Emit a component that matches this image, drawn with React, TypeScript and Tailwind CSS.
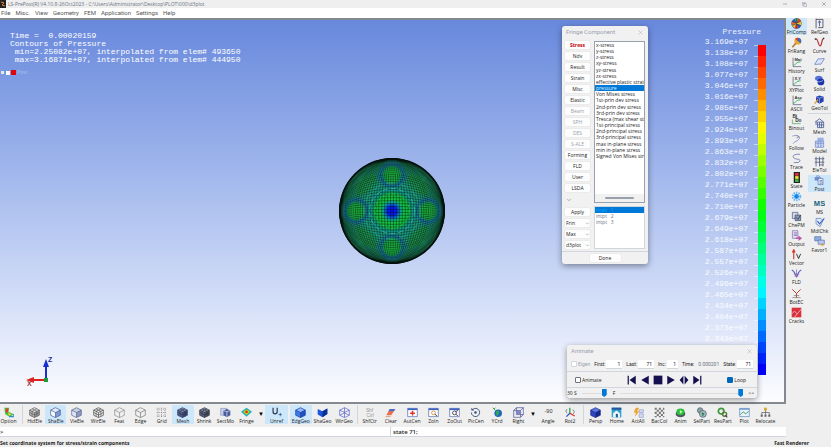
import type { ReactNode } from 'react';
import { ChevronDown, Copy, Minus, X } from 'lucide-react';

type Tool = { label: string; icon: ReactNode; active?: boolean };

const Svg = ({ children }: { children: ReactNode }) => (
  <svg viewBox="0 0 16 16" className="size-[11px] shrink-0" fill="none" aria-hidden="true">
    {children}
  </svg>
);

interface CubeProps {
  top?: string;
  left?: string;
  right?: string;
  line?: string;
  mesh?: boolean;
}

const Cube = ({ top = 'none', left = 'none', right = 'none', line = '#444', mesh = false }: CubeProps) => (
  <Svg>
    <path d="M8 1 15 4.5 8 8 1 4.5Z" fill={top} />
    <path d="M1 4.5 8 8v7.4L1 12Z" fill={left} />
    <path d="M15 4.5 8 8v7.4L15 12Z" fill={right} />
    <path d="M8 1 15 4.5V12L8 15.4 1 12V4.5ZM1 4.5 8 8l7-3.5M8 8v7.4" stroke={line} />
    {mesh && (
      <path
        d="M4.5 2.7 11.5 6.2v7.4M11.5 2.7 4.5 6.2v7.4M1 8.2 8 11.7l7-3.5"
        stroke={line}
        strokeWidth="0.9"
      />
    )}
  </Svg>
);

const WireCube = ({ line = '#555' }: { line?: string }) => (
  <Svg>
    <path
      d="M8 1 15 4.5V12L8 15.4 1 12V4.5ZM1 4.5 8 8l7-3.5M8 8v7.4M1 12l7-3.5 7 3.5M8 1v7.5"
      stroke={line}
    />
  </Svg>
);

const Fringe = () => (
  <Svg>
    <path d="M8 1 16 7 8 14 0 7Z" fill="#22a8e0" />
    <path d="M8 2.500 14 7 8 12.500 2 7Z" fill="#43c63c" />
    <path d="M8 4 12 7 8 11 4 7Z" fill="#f5e12a" />
    <circle cx="8" cy="7.200" r="2" fill="#e52b1e" />
  </Svg>
);

const Grid = () => (
  <Svg>
    <path d="M3 1v14M8 1v14M13 1v14M1 3h14M1 8h14M1 13h14" stroke="#777" strokeDasharray="1.500 1.500" />
  </Svg>
);

const ZoomBox = ({ out = false }: { out?: boolean }) => (
  <Svg>
    <path d="M1 2h14v12H1Z" fill="#fff" stroke="#5068a8" />
    <path d="M1 2h14v2.500H1Z" fill="#3d62c4" />
    <circle cx="8" cy="8.500" r="2.800" stroke={out ? '#334' : '#d08a3a'} strokeWidth="1.200" />
    <path d={out ? 'M10 10.500 13 13M9 7l4-2' : 'M10 10.500 13 13'} stroke="#445" strokeWidth="1.400" />
  </Svg>
);

// small axes with a curve, shared by the plotting tools
const Chart = ({ tag }: { tag: ReactNode }) => (
  <Svg>
    <path d="M3 1v13h12" stroke="#557" />
    <path d="M3 12c4 0 4-5 11-5" stroke="#2fb35a" strokeWidth="1.300" />
    {tag}
  </Svg>
);

const Tag = ({ children }: { children: string }) => (
  <text x="5" y="5.500" fontSize="6" fontWeight="700" fill="#333" fontFamily="Liberation Sans">
    {children}
  </text>
);

const ColorBall = () => (
  <Svg>
    <circle cx="8" cy="8" r="7.500" fill="#2f57b8" />
    <path d="m8 8-3-7 6-.5Z" fill="#3fa648" />
    <path d="m8 8 3-7.500 4 4Z" fill="#e23b2b" />
    <path d="m8 8 7-3.500V11Z" fill="#efc527" />
    <path d="m8 8 3 7-6 .3Z" fill="#e23b2b" />
    <path d="m8 8-3 7-4-4Z" fill="#efc527" />
    <path d="M8 8 .800 10V5Z" fill="#e8632a" />
    <path d="M2 5c4 2 8 2 12 0M2 11c4-2 8-2 12 0M8 1v14" stroke="#333" strokeWidth="0.7" />
  </Svg>
);

const bottomGroups: { tools: Tool[]; end?: 'line' | 'caret' | 'gap' }[] = [
  {
    tools: [
      {
        label: 'Option',
        icon: (
          <Svg>
            <path d="M2 1h7l-1 6 7 3-5 5-7-5Z" fill="#49bf46" />
            <path d="M4 2h4l-1 6H4Z" fill="#e23b2b" />
            <path d="m7 8 5 2-3 3Z" fill="#f4cf2d" />
            <path d="M9 14h6v-4" stroke="#2a8ccc" strokeWidth="1.500" />
          </Svg>
        ),
      },
    ],
    end: 'line',
  },
  {
    tools: [
      { label: 'HidEle', icon: <Cube top="#eee" left="#bbb" right="#999" line="#555" mesh /> },
      { label: 'ShaEle', icon: <Cube top="#e3edff" left="#f7faff" right="#7b98d6" line="#4a5f91" />, active: true },
      { label: 'VieEle', icon: <Cube top="#c8d0e6" left="#dfe5f5" right="#8d98bd" line="#566290" /> },
      { label: 'WirEle', icon: <Cube line="#444" mesh /> },
      { label: 'Feat', icon: <Cube line="#8a8a8a" /> },
      { label: 'Edge', icon: <Cube line="#777" /> },
      { label: 'Grid', icon: <Grid /> },
      { label: 'Mesh', icon: <Cube top="#8291b8" left="#596a98" right="#3d4b74" line="#26304d" mesh />, active: true },
      { label: 'Shrink', icon: <Cube top="#8891a8" left="#5b647c" right="#474e61" line="#2e3342" mesh /> },
      {
        label: 'SectMo',
        icon: (
          <Svg>
            <path d="M1 2h9v10H1Z" fill="#c9d2ea" stroke="#8b97bd" />
            <path d="m5 5 5-2 5 2v7l-5 3-5-3Z" fill="#4b5d9b" />
            <path d="m5 5 5 2 5-2M10 7v8" stroke="#dbe3f8" />
          </Svg>
        ),
      },
      { label: 'Fringe', icon: <Fringe /> },
    ],
    end: 'caret',
  },
  {
    tools: [
      {
        label: 'Unref',
        icon: (
          <Svg>
            <path d="M3 1v6a3 3 0 0 0 6 0V1" stroke="#333f55" strokeWidth="1.800" />
            <path d="M11 11h5M13.500 8.500v5" stroke="#3a5fa8" strokeWidth="1.200" />
          </Svg>
        ),
        active: true,
      },
    ],
    end: 'gap',
  },
  {
    tools: [
      { label: 'EdgGeo', icon: <Cube top="#8db7ff" left="#3f78ea" right="#2152c0" line="#173c94" />, active: true },
      {
        label: 'ShaGeo',
        icon: (
          <Svg>
            <path d="m1 3 7 3 7-4v8l-7 5-7-4Z" fill="#1c55d8" />
            <path d="m8 6 7-4v8l-7 5Z" fill="#0c2f96" />
          </Svg>
        ),
      },
      { label: 'WirGeo', icon: <WireCube line="#5661c9" /> },
    ],
    end: 'line',
  },
  {
    tools: [
      {
        label: 'ShfCtr',
        icon: (
          <Svg>
            <g fontSize="7" fill="#999" fontFamily="Liberation Sans" textAnchor="middle">
              <text x="8" y="7">Shf</text>
              <text x="9" y="15">Ctrl</text>
            </g>
          </Svg>
        ),
      },
      {
        label: 'Clear',
        icon: (
          <Svg>
            <path d="m2 12 5-9h8l-6 9Z" fill="#ef6b4a" />
            <path d="M7 3h8l-2 3H5Z" fill="#4b6fc8" />
            <path d="M1 14h7" stroke="#e09b7b" strokeWidth="1.500" />
          </Svg>
        ),
      },
      {
        label: 'AutCen',
        icon: (
          <Svg>
            <path d="M1 2h14v12H1Z" fill="#fff" stroke="#4a68b8" />
            <path d="M1 2h14v2.500H1Z" fill="#3d62c4" />
            <path d="M8 5.500v7M4.500 9h7" stroke="#e0322a" strokeWidth="2.200" />
          </Svg>
        ),
      },
      { label: 'ZoIn', icon: <ZoomBox /> },
      { label: 'ZoOut', icon: <ZoomBox out /> },
      {
        label: 'PicCen',
        icon: (
          <Svg>
            <path d="M4 3.500A6 6 0 1 1 2 8" stroke="#364b78" strokeWidth="1.300" />
            <path d="M2 1v4h4Z" fill="#364b78" />
            <circle cx="8" cy="8" r="1.800" fill="#364b78" />
          </Svg>
        ),
      },
      {
        label: 'YCrd',
        icon: (
          <Svg>
            <circle cx="9" cy="9" r="5.500" fill="#1f67b8" />
            <path d="M6 6c3-2 5 0 4 3s-2 4-4 3Z" fill="#35a853" />
            <path d="M1 1l4 4M5 1 3 3" stroke="#2aa84a" strokeWidth="1.400" />
          </Svg>
        ),
      },
      {
        label: 'Right',
        icon: (
          <Svg>
            <path d="M5 1h10v10H5ZM1 5h10v10H1ZM1 5l4-4M11 5l4-4M11 15l4-4" stroke="#474f92" />
            <path d="M5 5h6v6H5Z" fill="#7d87c7" />
          </Svg>
        ),
      },
    ],
    end: 'caret',
  },
  {
    tools: [
      {
        label: 'Angle',
        icon: (
          <Svg>
            <text x="8" y="8" fontSize="8" fill="#333" textAnchor="middle" fontFamily="Liberation Sans">
              -90
            </text>
          </Svg>
        ),
      },
      {
        label: 'Rot2',
        icon: (
          <Svg>
            <path d="M7 9V1" stroke="#1fa04a" strokeWidth="1.800" />
            <path d="m7 9 7 4" stroke="#d8302a" strokeWidth="1.800" />
            <path d="m7 9-5 5" stroke="#2b56c8" strokeWidth="1.800" />
            <path d="M11 4c3 1 3 4 1 6" stroke="#555" />
            <path d="M3 3c-2 2-2 4 0 6" stroke="#555" />
          </Svg>
        ),
      },
    ],
    end: 'line',
  },
  {
    tools: [
      { label: 'Persp', icon: <Cube top="#5c78e8" left="#2b44c8" right="#15268c" line="#1b2a80" /> },
      {
        label: 'Home',
        icon: (
          <Svg>
            <path d="M1 1h14v14H1Z" fill="#2e9fce" />
            <path d="M1 1h14v3H1Z" fill="#24569e" />
            <path d="m8 5 5 4v6H3V9Z" fill="#eaf6fb" />
            <path d="M7 10h3v5H7Z" fill="#24569e" />
          </Svg>
        ),
      },
      {
        label: 'ActAll',
        icon: (
          <Svg>
            <path d="M4 1h5L6 6h3l-6 8 1-6H1Z" fill="#f3a32c" />
            <path d="M9 4h6v4H9ZM9 10h6v5H9Z" fill="#d5ddf2" stroke="#8fa1d0" />
          </Svg>
        ),
      },
      {
        label: 'BacCol',
        icon: (
          <Svg>
            <path
              d="M1 1h3v3H1zM7 1h3v3H7zM13 1h2v3h-2zM4 4h3v3H4zM10 4h3v3h-3zM1 7h3v3H1zM7 7h3v3H7zM13 7h2v3h-2zM4 10h3v3H4zM10 10h3v3h-3zM1 13h3v2H1zM7 13h3v2H7zM13 13h2v2h-2z"
              fill="#777"
            />
          </Svg>
        ),
      },
      {
        label: 'Anim',
        icon: (
          <Svg>
            <ellipse cx="8" cy="10" rx="7" ry="5" fill="#4b5563" />
            <ellipse cx="8" cy="7" rx="6" ry="5" fill="#2dbb3a" />
            <path d="m7 4 4 3-4 3Z" fill="#b8f5b2" />
          </Svg>
        ),
      },
      {
        label: 'SelPart',
        icon: (
          <Svg>
            <circle cx="6" cy="5" r="4" fill="#8fa0a8" stroke="#45606a" />
            <circle cx="10" cy="10" r="5" fill="#a9bcc4" stroke="#3b5a68" />
            <path d="M8 10h4M10 8v5" stroke="#2d7a52" strokeWidth="1.500" />
          </Svg>
        ),
      },
      {
        label: 'ResPart',
        icon: (
          <Svg>
            <circle cx="6" cy="6" r="4" stroke="#3c9a3a" strokeWidth="2.600" />
            <circle cx="11" cy="10.500" r="3" stroke="#5a7a3c" strokeWidth="2" />
            <path d="m12 12 3 3" stroke="#444" strokeWidth="1.600" />
          </Svg>
        ),
      },
      {
        label: 'Plot',
        icon: (
          <Svg>
            <path d="M1 2h14v12H1Z" fill="#e7f2fb" stroke="#5c84bd" />
            <path d="M1 2h14v2H1Z" fill="#6d96cf" />
            <path d="m2 11 4-4 4 3 4-4" stroke="#3a9a62" strokeWidth="1.300" />
          </Svg>
        ),
      },
      {
        label: 'Relocate',
        icon: (
          <Svg>
            <path d="M8 4v4M2.500 11V8h11v3M8 8v3" stroke="#555" />
            <path d="M6 1h4v4H6Z" fill="#d7a52b" />
            <path d="M1 11h3v3H1ZM6.500 11h3v3h-3ZM12 11h3v3h-3Z" fill="#667" />
          </Svg>
        ),
      },
    ],
  },
];

const postTools: Tool[] = [
  { label: 'FriComp', icon: <ColorBall />, active: true },
  {
    label: 'FriRang',
    icon: (
      <Svg>
        <circle cx="10" cy="6" r="5" fill="#e9a92c" />
        <path d="M10 6V1a5 5 0 0 1 4 8Z" fill="#3c67c4" />
        <path d="M10 6 6 3a5 5 0 0 1 4-2Z" fill="#d9392b" />
        <path d="m7 9-5 6" stroke="#a87a36" strokeWidth="2.200" />
      </Svg>
    ),
  },
  { label: 'History', icon: <Chart tag={<Tag>Mat</Tag>} /> },
  { label: 'XYPlot', icon: <Chart tag={<Tag>X,Y</Tag>} /> },
  { label: 'ASCII', icon: <Chart tag={<Tag>Asc</Tag>} /> },
  {
    label: 'Binout',
    icon: (
      <Svg>
        <g fontSize="7" fontWeight="700" fill="#333" fontFamily="Liberation Sans">
          <text x="2" y="6">Bi</text>
          <text x="6" y="12">Do</text>
        </g>
        <path d="M2 8v6h12" stroke="#3fa45a" />
      </Svg>
    ),
  },
  {
    label: 'Follow',
    icon: (
      <Svg>
        <path d="M2 3c6-2 12 0 10 4S5 10 3 14" stroke="#8a8fd8" strokeWidth="1.300" />
        <path d="m8 2 4 2-4 2" stroke="#777" />
      </Svg>
    ),
  },
  {
    label: 'Trace',
    icon: (
      <Svg>
        <path d="M13 2C6 1 1 4 4 7s9 1 9 4-5 3-9 3" stroke="#6b74a8" strokeWidth="1.300" />
      </Svg>
    ),
  },
  {
    label: 'State',
    icon: (
      <Svg>
        <path d="M4 0h9v16H4Z" fill="#222" />
        <path d="M6 1.500h5v4H6Z" fill="#e6352b" />
        <path d="M6 6h5v4H6Z" fill="#f1df2e" />
        <path d="M6 10.500h5v4H6Z" fill="#3bc13d" />
      </Svg>
    ),
  },
  {
    label: 'Particle',
    icon: (
      <Svg>
        <circle cx="8" cy="8" r="3.500" fill="#1487e8" />
        <circle cx="8" cy="8" r="5.500" stroke="#5db4f7" strokeWidth="3" strokeDasharray="2 1.500" />
      </Svg>
    ),
  },
  {
    label: 'ChePM',
    icon: (
      <Svg>
        <path d="M2 2h8v9H2Z" fill="#d3d9e8" stroke="#4d5a80" />
        <path d="M6 6h8v8H6Z" fill="#8f9cbf" stroke="#3d4768" />
        <path d="m7 9 3 3 4-6" stroke="#222" />
      </Svg>
    ),
  },
  {
    label: 'Output',
    icon: (
      <Svg>
        <path d="M2 1h8v11H2Z" fill="#e5e0f5" stroke="#7a6cab" />
        <path d="M4 4h5M4 6h5M4 8h5" stroke="#7a6cab" />
        <path d="M7 11h4V8l5 4-5 4v-3H7Z" fill="#b856a8" />
      </Svg>
    ),
  },
  {
    label: 'Vector',
    icon: (
      <Svg>
        <path d="M4 15V3M2 5l2-4 2 4" stroke="#d23229" strokeWidth="1.600" />
        <path d="m8 7 3 7 3-7" stroke="#333" strokeWidth="1.400" />
      </Svg>
    ),
  },
  {
    label: 'FLD',
    icon: (
      <Svg>
        <path d="M1 3c5 1 5 9 7 9s2-8 7-9" stroke="#5b63c9" strokeWidth="1.600" />
        <path d="M4 9h8M5 12h6M8 2v12" stroke="#8c5bb0" />
      </Svg>
    ),
  },
  {
    label: 'BotEC',
    icon: (
      <Svg>
        <path d="m2 2 6 6 6-6M8 8v6" stroke="#c0392b" strokeWidth="1.400" />
        <path d="M2 14h12M4 11h8" stroke="#777" />
      </Svg>
    ),
  },
  {
    label: 'Cracks',
    icon: (
      <Svg>
        <path d="M1 1h14v14H1Z" fill="#d8323c" />
        <path d="m1 10 4-4 4 4 6-7M5 15l4-5" stroke="#f6b8bb" strokeWidth="1.300" />
      </Svg>
    ),
  },
];

const modelGroups: Tool[][] = [
  [
    {
      label: 'RefGeo',
      icon: (
        <Svg>
          <path d="M3 1v14M3 2h10v12H6" stroke="#445" strokeWidth="1.200" />
          <path d="M8 4v8M6 7l2-3 2 3" stroke="#3d5bb0" strokeWidth="1.300" />
        </Svg>
      ),
    },
    {
      label: 'Curve',
      icon: (
        <Svg>
          <path d="M2 3c4-2 4 10 7 10s1-9 5-11" stroke="#b3343a" strokeWidth="1.700" />
          <path d="M1 2h2v2H1ZM13 1h2v2h-2Z" fill="#333" />
        </Svg>
      ),
    },
    {
      label: 'Surf',
      icon: (
        <Svg>
          <path d="M6 4c3 1 6-1 9 0l-5 8c-3-1-6 1-9 0Z" fill="#dbe5fa" stroke="#5470b5" />
        </Svg>
      ),
    },
    {
      label: 'Solid',
      icon: (
        <Svg>
          <ellipse cx="7" cy="5" rx="5.500" ry="4" fill="#5871d8" />
          <circle cx="10" cy="10" r="5" fill="#1b35a8" />
          <path d="M3 8c3 3 7 2 10 0" stroke="#cfd9ff" />
        </Svg>
      ),
    },
    {
      label: 'GeoTol',
      icon: (
        <Svg>
          <path d="m3 4 5-2 6 2v7l-6 3-5-3Z" fill="#2440ae" />
          <path d="m3 4 5 2 6-2M8 6v8" stroke="#9eb1f0" />
          <path d="m1 14 5-6" stroke="#d8a12b" strokeWidth="2" />
        </Svg>
      ),
    },
  ],
  [
    {
      label: 'Mesh',
      icon: (
        <Svg>
          <path d="m2 6 6-5 6 5M5 6h9v8H5ZM5 10h9M8 6v8M11 6v8M3 4v6" stroke="#465a96" strokeWidth="1.200" />
        </Svg>
      ),
    },
    {
      label: 'Model',
      icon: (
        <Svg>
          <path d="M5 1h9v5H5Z" fill="#9bb1e6" />
          <path d="M2 6h12v9H2Z" fill="#c9d6f5" stroke="#6c86c9" />
          <path d="M2 9h12M6 6v9M10 6v9" stroke="#6c86c9" />
        </Svg>
      ),
    },
    {
      label: 'EleTol',
      icon: (
        <Svg>
          <path d="M3 1v14M8 1v14M13 1v14M1 4h14M1 9h14M8 13h6" stroke="#515c7c" strokeWidth="1.200" />
        </Svg>
      ),
    },
    {
      label: 'Post',
      active: true,
      icon: (
        <Svg>
          <path d="M1 3h7v5H1Z" fill="#6d8bd0" />
          <path d="M6 5h7v9H6Z" fill="#eef3ff" stroke="#5369a5" />
          <path d="M8 8h4M8 10h4M8 12h4M3 2l3-1 4 3" stroke="#5369a5" />
        </Svg>
      ),
    },
  ],
  [
    {
      label: 'MS',
      icon: (
        <Svg>
          <text x="8" y="12" fontSize="11" fontWeight="700" fill="#17637c" textAnchor="middle" fontFamily="Liberation Sans">
            MS
          </text>
        </Svg>
      ),
    },
    {
      label: 'MdlChk',
      icon: (
        <Svg>
          <path d="M3 2h7l3 3-4 9-6-4Z" fill="#dfe8fb" stroke="#5a78bb" />
          <path d="m5 6 3 4 7-8" stroke="#3563b8" strokeWidth="1.500" />
        </Svg>
      ),
    },
    {
      label: 'Favor1',
      icon: (
        <Svg>
          <path d="M1 1h9v6H1Z" fill="#8faadf" stroke="#5873b0" />
          <path d="M6 6h9v6H6Z" fill="#b7c9ef" stroke="#5873b0" />
          <path d="m9 13 3-3 2 5Z" fill="#ec9a2c" />
        </Svg>
      ),
    },
  ],
];

const menus = ['File', 'Misc.', 'View', 'Geometry', 'FEM', 'Application', 'Settings', 'Help'];

const components = [
  'x-stress', 'y-stress', 'z-stress', 'xy-stress', 'yz-stress', 'zx-stress',
  'effective plastic strain', 'pressure', 'Von Mises stress',
  '1st-prin dev stress', '2nd-prin dev stress', '3rd-prin dev stress',
  'Tresca (max shear stress)', '1st-principal stress', '2nd-principal stress',
  '3rd-principal stress', 'max in-plane stress', 'min in-plane stress',
  'Signed Von Mises stress',
];

const categories = [
  'Stress', 'Ndv', 'Result', 'Strain', 'Misc', 'Elastic', 'Beam',
  'SPH', 'DES', 'S-ALE', 'Forming', 'FLD', 'User', 'LSDA',
];
const disabledCategories = ['Beam', 'SPH', 'DES', 'S-ALE'];

const BANDS = 30;
const levels = [
  '3.169', '3.138', '3.108', '3.077', '3.046', '3.016', '2.985', '2.955', '2.924', '2.893',
  '2.863', '2.832', '2.802', '2.771', '2.740', '2.710', '2.679', '2.649', '2.618', '2.587',
  '2.557', '2.526', '2.496', '2.465', '2.434', '2.404', '2.373', '2.343',
];

const ToolButton = ({ tool }: { tool: Tool }) => (
  <button
    type="button"
    className={`flex min-w-0 flex-col items-center justify-end whitespace-nowrap text-[5px] leading-[6px] text-[#222] ${
      tool.active ? 'bg-[#cce6fa]' : ''
    }`}
  >
    {tool.icon}
    <span>{tool.label}</span>
  </button>
);

const Sphere = () => {
  const R = 52;
  const steps = Array.from({ length: 20 }, (_, i) => R * Math.sin(((i + 0.5) * 3.3 * Math.PI) / 180));
  const lobes = [[0, -36], [36, 0], [0, 36], [-36, 0]];
  return (
    <svg viewBox="-54 -54 108 108" className="size-[108px]" fill="none" aria-label="Pressure contours">
      <defs>
        <radialGradient id="shell">
          <stop offset="0" stopColor="#17a080" />
          <stop offset="0.6" stopColor="#1f9e80" />
          <stop offset="0.88" stopColor="#1f8a60" />
          <stop offset="0.96" stopColor="#144f35" />
          <stop offset="1" stopColor="#05150e" />
        </radialGradient>
        <radialGradient id="core">
          <stop offset="0" stopColor="#0505f0" />
          <stop offset="0.18" stopColor="#0a1ff0" />
          <stop offset="0.32" stopColor="#0b9ab0" />
          <stop offset="0.45" stopColor="#15c83f" />
          <stop offset="0.66" stopColor="#17b845" />
          <stop offset="0.8" stopColor="#149a96" />
          <stop offset="1" stopColor="#179080" stopOpacity="0" />
        </radialGradient>
        <radialGradient id="lobe">
          <stop offset="0" stopColor="#24c23c" />
          <stop offset="0.5" stopColor="#1cb04a" />
          <stop offset="0.75" stopColor="#1c80b0" />
          <stop offset="1" stopColor="#1a7a94" stopOpacity="0" />
        </radialGradient>
      </defs>
      <circle r="53" fill="url(#shell)" />
      {[45, 135, 225, 315].map((a) => (
        <ellipse key={a} cx="37" rx="7" ry="13" fill="#23a040" opacity="0.6" transform={`rotate(${a})`} />
      ))}
      {lobes.map(([x, y]) => (
        <circle key={`${x},${y}`} cx={x} cy={y} r="15" fill="url(#lobe)" />
      ))}
      <circle r="26" fill="url(#core)" />
      <g stroke="#02120e" strokeWidth="0.7">
        {steps.map((r, i) => (
          <g key={r} opacity={i > 13 ? 0.35 : 0.58}>
            <ellipse rx={r} ry="52.500" />
            <ellipse rx="52.500" ry={r} />
          </g>
        ))}
      </g>
      <circle r="22.500" stroke="#3cc4a8" strokeDasharray="5 3" opacity="0.7" />
      <circle r="17" stroke="#3fe070" strokeDasharray="2 3" opacity="0.6" />
      {lobes.map(([x, y]) => (
        <circle key={`${x},${y}`} cx={x} cy={y} r="11" stroke="#123a78" strokeDasharray="3 1" opacity="0.6" />
      ))}
      <circle r="28" stroke="#2ab59c" strokeWidth="0.8" strokeDasharray="8 6" opacity="0.7" />
      <circle r="52" stroke="#06110c" strokeWidth="1.500" />
    </svg>
  );
};

const Triad = () => (
  <svg viewBox="0 0 30 32" className="absolute bottom-[15px] left-[24px] h-[32px] w-[30px]" fill="none">
    <path d="M22 25V10" stroke="#1a2fd0" strokeWidth="2" />
    <path d="m22 4-3 8h6Z" fill="#1a2fd0" />
    <path d="M22 25H9" stroke="#d22" strokeWidth="2" />
    <path d="m2 25 8-3v6Z" fill="#d22" />
    <path d="M20 23h4v4h-4Z" fill="#1c9a36" />
    <g fontSize="7" fontWeight="700" fontFamily="Liberation Sans">
      <text x="24" y="7" fill="#1a2fa0">Z</text>
      <text x="3" y="31" fill="#a33">X</text>
    </g>
  </svg>
);

const Legend = () => (
  <div className="absolute right-[18px] top-[7px] flex flex-col font-['Liberation_Mono',monospace] text-[8px] text-white/90">
    <div className="mr-[5px] self-end leading-[9px]">Pressure</div>
    <div className="flex">
      <div className="mr-[6px] leading-[11px]">
        {levels.map((v) => (
          <div key={v}>{v}e+07</div>
        ))}
      </div>
      <div className="mt-[9px]">
        {Array.from({ length: BANDS }, (_, i) => (
          <div key={i} className="flex h-[11px]">
            <span className="w-1 border-t border-white/50" />
            <span className="w-2" style={{ background: `hsl(${(i * 240) / (BANDS - 1)} 100% 50%)` }} />
          </div>
        ))}
      </div>
    </div>
  </div>
);

const dialogClass = 'absolute flex flex-col rounded-[3px] bg-[#f1f1f1] text-[5px] leading-[6px] text-[#222] shadow-[0_2px_6px_rgba(0,0,0,0.4)]';
const buttonClass = 'h-2 rounded-[1px] bg-[#fdfdfd] shadow-[0_0_1px_rgba(0,0,0,0.25)]';

const DialogTitle = ({ children }: { children: string }) => (
  <div className="flex h-3 shrink-0 items-center justify-between px-1 font-['Roboto',sans-serif] text-[6px] text-gray-400">
    <span>{children}</span>
    <button type="button" aria-label={`Close ${children}`}>
      <X size={7} strokeWidth={1.5} />
    </button>
  </div>
);

const DropDown = ({ label, value }: { label: string; value: string }) => (
  <div className={`flex items-center ${buttonClass}`}>
    <select aria-label={label} className="min-w-0 flex-1 appearance-none pl-px" defaultValue={value}>
      <option>{value}</option>
    </select>
    <ChevronDown size={5} className="shrink-0 text-gray-500" />
  </div>
);

const FringeDialog = () => (
  <section className={`${dialogClass} right-[136px] top-[6px] w-[86px]`}>
    <DialogTitle>Fringe Component</DialogTitle>
    <div className="flex gap-[4px] px-[3px] pt-[3px]">
      <div className="flex w-[25px] flex-col gap-[3px]">
        {categories.map((c, i) => (
          <button
            key={c}
            type="button"
            disabled={disabledCategories.includes(c)}
            className={`${buttonClass} disabled:text-gray-400 ${i === 0 ? 'font-bold text-red-700' : ''}`}
          >
            {c}
          </button>
        ))}
        <button type="button" aria-label="More" className="flex h-[10px] items-center pl-px text-gray-500">
          <ChevronDown size={6} />
        </button>
        <button type="button" className={buttonClass}>Apply</button>
        <DropDown label="Range" value="Frin" />
        <DropDown label="Integration" value="Max" />
        <DropDown label="Source" value="d3plot" />
      </div>
      <div className="flex min-w-0 flex-1 flex-col gap-[3px]">
        <div className="flex flex-1 flex-col border border-gray-400 bg-white">
          <ul role="listbox" aria-label="Component" className="flex h-[117px] flex-col justify-between overflow-hidden whitespace-nowrap">
            {components.map((c) => (
              <li
                key={c}
                role="option"
                aria-selected={c === 'pressure'}
                className="pl-px aria-selected:bg-[#0078d7] aria-selected:text-sky-100"
              >
                {c}
              </li>
            ))}
          </ul>
          <div className="mt-auto flex h-2 items-center justify-center bg-[#f1f1f1]">
            <span className="h-[2px] w-[29px] rounded bg-gray-400" />
          </div>
        </div>
        <ul role="listbox" aria-label="Integration point" className="h-[43px] whitespace-pre border border-gray-300 bg-white text-gray-500">
          {[1, 2, 3].map((n) => (
            <li
              key={n}
              role="option"
              aria-selected={n === 1}
              className="pl-px aria-selected:bg-[#0078d7] aria-selected:text-sky-500"
            >
              {`intpt   ${n}`}
            </li>
          ))}
        </ul>
      </div>
    </div>
    <div className="mt-[2px] flex justify-center border-t border-gray-300 py-[2px]">
      <button type="button" className={`${buttonClass} w-[31px]`}>Done</button>
    </div>
  </section>
);

const Field = ({ label, value, wide = true }: { label: string; value: string; wide?: boolean }) => (
  <label className="flex shrink-0 items-center gap-px">
    {label}
    <input
      type="text"
      defaultValue={value}
      className={`h-[9px] border-b border-gray-300 bg-white pr-[2px] text-right ${wide ? 'w-[16px]' : 'w-[11px]'}`}
    />
  </label>
);

const checkClass = 'size-[6px] appearance-none rounded-[1px] border border-gray-500 bg-white checked:border-[#0067b8] checked:bg-[#0067b8] disabled:border-gray-300';
const rangeClass =
  'h-2 appearance-none bg-[linear-gradient(#ddd,#ddd)] bg-[length:100%_1px] bg-center bg-no-repeat [&::-webkit-slider-thumb]:h-2 [&::-webkit-slider-thumb]:w-[5px] [&::-webkit-slider-thumb]:appearance-none [&::-webkit-slider-thumb]:bg-[#0078d7] [&::-webkit-slider-thumb]:[clip-path:polygon(0_0,100%_0,100%_75%,50%_100%,0_75%)]';

const transport = [
  { name: 'First state', d: 'M1 1h2v14H1ZM14 1v14L4 8Z' },
  { name: 'Play backward', d: 'M14 1v14L2 8Z' },
  { name: 'Stop', d: 'M1 1h14v14H1Z' },
  { name: 'Play forward', d: 'M2 1v14l12-7Z' },
  { name: 'Bounce', d: 'M7 1v14L1 8ZM9 1v14l6-7Z' },
  { name: 'Last state', d: 'M13 1h2v14h-2ZM2 1v14l10-7Z' },
];

const AnimateDialog = () => (
  <section className={`${dialogClass} bottom-[4px] right-[27px] w-[190px]`}>
    <DialogTitle>Animate</DialogTitle>
    <div className="flex h-[14px] items-center justify-between px-1 font-['Roboto',sans-serif]">
      <label className="flex items-center gap-px text-gray-400">
        <input type="checkbox" disabled className={checkClass} />
        Eigen
      </label>
      <Field label="First:" value="1" />
      <Field label="Last:" value="71" />
      <Field label="Inc:" value="1" wide={false} />
      <span>Time:</span>
      <output className="text-gray-500">0.000201</output>
      <Field label="State:" value="71" />
    </div>
    <div className="flex h-[17px] items-center justify-between border-y border-gray-300 pl-2 pr-[11px]">
      <label className="flex items-center gap-px">
        <input type="checkbox" className={checkClass} />
        Animate
      </label>
      <div className="flex gap-[3px]">
        {transport.map((t) => (
          <button key={t.name} type="button" aria-label={t.name}>
            <svg viewBox="0 0 16 16" className="size-[10px]" fill="#151050">
              <path d={t.d} />
            </svg>
          </button>
        ))}
      </div>
      <label className="flex items-center gap-px">
        <input type="checkbox" defaultChecked className={checkClass} />
        Loop
      </label>
    </div>
    <div className="flex h-[10px] items-center gap-[5px] pr-[3px]">
      <span>30 S</span>
      <input type="range" aria-label="Speed" defaultValue={95} className={`${rangeClass} w-[26px]`} />
      <span>F</span>
      <input type="range" aria-label="State" min={1} max={71} defaultValue={71} className={`${rangeClass} min-w-0 flex-1`} />
      <span>&gt;&gt;</span>
    </div>
  </section>
);

const Viewport = () => (
  <main className="relative min-h-[386px] flex-1 border-y-2 border-r-2 border-[#84888f] bg-linear-to-b from-[#6888dc] to-[#fdfdff]">
    <div className="absolute inset-0 grid place-items-center">
      <Sphere />
    </div>
    <div className="relative whitespace-pre pl-[10px] pt-[12px] font-['Liberation_Mono',monospace] text-[8px] leading-[8px] text-white">
      <p>Time =  0.00020159</p>
      <p>Contours of Pressure</p>
      <p> min=2.25082e+07, interpolated from elem# 493650</p>
      <p> max=3.16871e+07, interpolated from elem# 444950</p>
    </div>
    <div className="relative mt-[6px] flex items-center gap-px text-[5px] leading-[5px] text-white/40">
      <span className="ml-px size-[3px] bg-gray-200" />
      <span className="ml-px size-[4px] bg-white" />
      <span className="size-[5px] bg-red-600" />
      <span>Post</span>
    </div>
    <Triad />
    <Legend />
    <FringeDialog />
    <AnimateDialog />
  </main>
);

const BottomToolbar = () => (
  <div className="flex h-[23px] pr-[10px]">
    <div className="-ml-[3px] grid flex-1 auto-cols-auto grid-flow-col pb-[3px] pt-px">
      {bottomGroups.map((g) => (
        <div key={g.tools[0].label} className="flex">
          {g.tools.map((t) => (
            <div key={t.label} className="grid w-[21px] grow">
              <ToolButton tool={t} />
            </div>
          ))}
          {g.end === 'line' && <span className="mx-px w-[2px] border-r border-gray-300" />}
          {g.end === 'gap' && <span className="w-[2px]" />}
          {g.end === 'caret' && (
            <button type="button" aria-label="More options" className="w-2 text-[6px] text-black">
              ▼
            </button>
          )}
        </div>
      ))}
    </div>
  </div>
);

const SideToolbar = () => (
  <aside className="flex w-[45px] gap-px">
    <div className="flex h-[306px] w-[21px] flex-col justify-between">
      {postTools.map((t) => (
        <ToolButton key={t.label} tool={t} />
      ))}
    </div>
    <div className="flex flex-1 flex-col gap-[2px]">
      {modelGroups.map((group, i) => (
        <div key={group[0].label} className={`flex flex-col gap-[2px] ${i === 1 ? 'border-t border-gray-300 pt-[4px]' : ''} ${i === 2 ? 'pt-[4px]' : ''}`}>
          {group.map((t) => (
            <ToolButton key={t.label} tool={t} />
          ))}
        </div>
      ))}
    </div>
  </aside>
);

export default function App() {
  return (
    <div className="flex min-h-screen flex-col overflow-hidden bg-[#efefef] font-['Open_Sans',sans-serif] text-[#222]">
      <header className="flex h-2 items-center gap-[2px] text-[5px] leading-[8px] text-gray-500">
        <svg viewBox="0 0 6 8" className="h-2 w-[6px]">
          <path d="M0 0h6v8H0Z" fill="#222" />
          <path d="m1 2 3 1-2 2 3 1" stroke="#d9822b" fill="none" />
        </svg>
        <h1>LS-PrePost(R) V4.10.8-26Oct2023 - C:\Users\Administrator\Desktop\PLOT\000\d3plot</h1>
        <div className="ml-auto flex gap-[14px] pr-1">
          <button type="button" aria-label="Minimize"><Minus size={6} /></button>
          <button type="button" aria-label="Restore"><Copy size={5} /></button>
          <button type="button" aria-label="Close"><X size={6} /></button>
        </div>
      </header>
      <nav className="flex h-[10px] items-center gap-[5px] bg-white pl-px font-['Roboto',sans-serif] text-[6px] leading-[10px] text-[#555]">
        {menus.map((m) => (
          <button key={m} type="button">{m}</button>
        ))}
      </nav>
      <div className="flex flex-1">
        <div className="flex min-w-0 flex-1 flex-col">
          <Viewport />
          <BottomToolbar />
          <div className="flex h-[10px] border-b border-gray-300 bg-white pr-[6px] text-[6px] leading-[9px]">
            <input type="text" aria-label="Command" defaultValue=">" className="w-1/2 pt-px font-semibold" />
            <output className="flex-1 border-l border-gray-300 pl-[2px] pt-px font-semibold">state 71;</output>
          </div>
        </div>
        <SideToolbar />
      </div>
      <footer className="flex h-[10px] items-center justify-between pr-[22px] pt-[2px] text-[5px] font-bold leading-[8px]">
        <span>Set coordinate system for stress/strain components</span>
        <span>Fast Renderer</span>
      </footer>
    </div>
  );
}
